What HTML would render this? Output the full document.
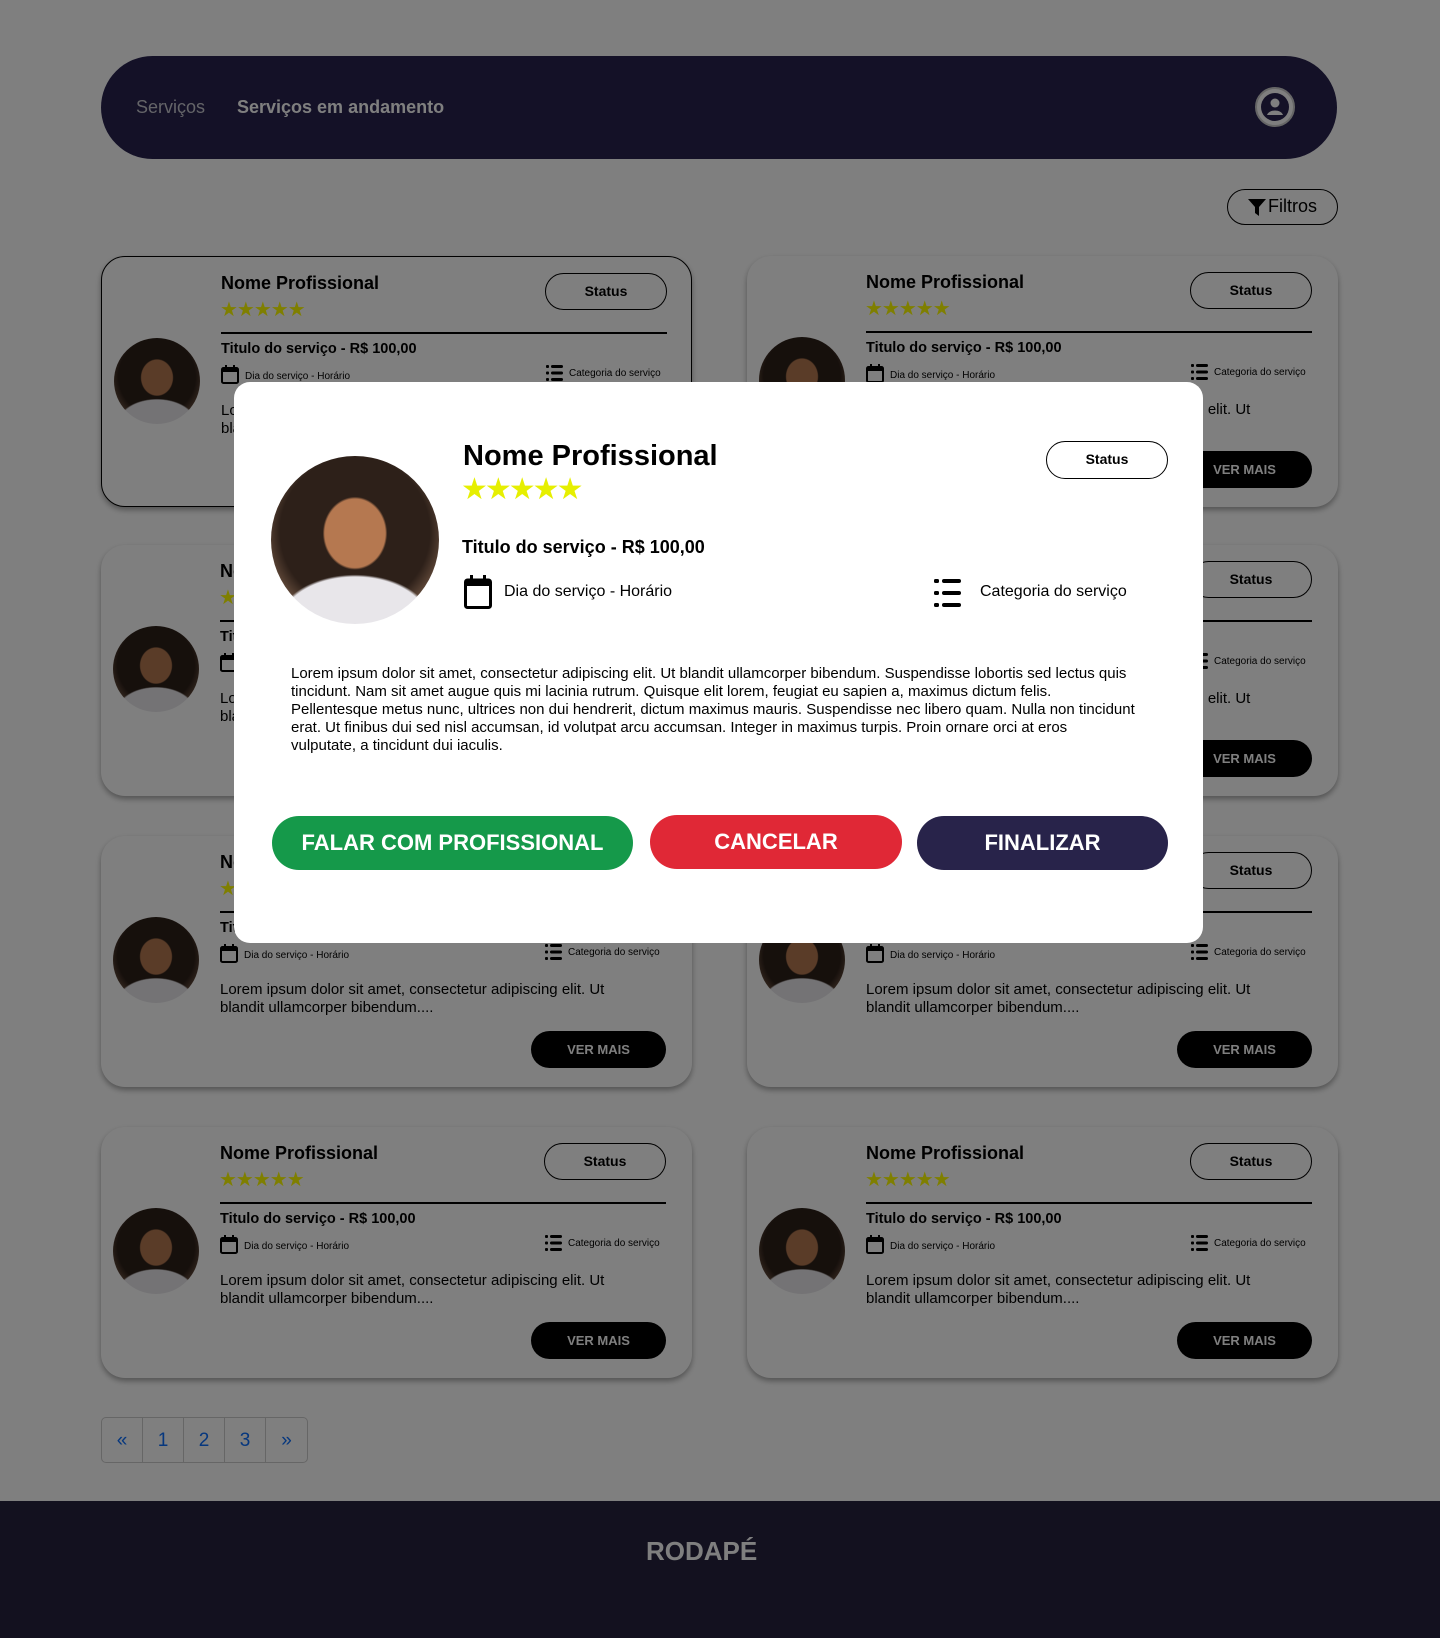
<!DOCTYPE html>
<html><head><meta charset="utf-8"><style>
*{box-sizing:border-box;margin:0;padding:0}
body{width:1440px;height:1638px;position:relative;background:#fff;font-family:"Liberation Sans",sans-serif;overflow:hidden;color:#000}
.abs{position:absolute}
.nav{left:101px;top:56px;width:1236px;height:103px;background:#28234f;border-radius:52px}
.nav .l1{left:35px;top:41px;font-size:18px;color:#c8c8d0}
.nav .l2{left:136px;top:41px;font-size:18px;font-weight:bold;color:#fff}
.user{left:1154px;top:31px;width:40px;height:40px;border-radius:50%;background:#fff;border:2px solid #ccc}
.filt{left:1227px;top:189px;width:111px;height:36px;border:1.5px solid #000;border-radius:18px;font-size:18px;line-height:33px;padding-left:40px}
.card{width:591px;height:251px;border-radius:24px;background:#fff;box-shadow:0 3px 6px rgba(0,0,0,.35)}
.card.b{border:1.5px solid #000}
.av{border-radius:50%;background:radial-gradient(ellipse 30% 34% at 50% 46%,#b57850 0 60%,transparent 64%),radial-gradient(ellipse 55% 35% at 50% 100%,#e8e6ea 0 80%,transparent 84%),radial-gradient(circle at 50% 45%,#2d2019 0 60%,#6b5140 75%,#c9a88a 100%)}
.card .av{left:12px;top:81px;width:86px;height:86px}
.nm{left:119px;top:16px;font-size:18px;font-weight:bold}
.st{left:118px;top:40px;font-size:20px;color:#ffff00;letter-spacing:-1px}
.stb{left:443px;top:16px;width:122px;height:37px;border:1.5px solid #000;border-radius:19px;font-size:14px;font-weight:bold;text-align:center;line-height:34px}
.hr{left:119px;top:75px;width:446px;height:1.5px;background:#000}
.tt{left:119px;top:84px;font-size:14.5px;font-weight:bold}
.cal{left:119px;top:108px}
.dt{left:143px;top:114px;font-size:10px}
.lst{left:444px;top:107px}
.ct{left:467px;top:111px;font-size:10px}
.ds{left:119px;top:145px;width:415px;font-size:15px;line-height:18px}
.vm{left:430px;top:195px;width:135px;height:37px;background:#000;border-radius:19px;color:#fff;font-size:13px;font-weight:bold;text-align:center;line-height:37px}
.pg{left:101px;top:1417px;height:46px;display:flex;border:1px solid #ccc;border-radius:5px;overflow:hidden}
.pg div{width:41px;border-right:1px solid #ccc;text-align:center;line-height:46px;color:#0d6efd;font-size:19px}
.pg div:last-child{border-right:none}
.foot{left:0;top:1501px;width:1440px;height:137px;background:#26223f}
.foot div{left:646px;top:35px;font-size:26px;font-weight:bold;color:#fff}
.ov{left:0;top:0;width:1440px;height:1638px;background:rgba(0,0,0,.5)}
.modal{left:234px;top:382px;width:969px;height:561px;background:#fff;border-radius:16px}
.btn{height:54px;border-radius:27px;color:#fff;font-size:22px;font-weight:bold;text-align:center;line-height:54px}
</style></head><body>
<div class="abs nav"><div class="abs l1">Serviços</div><div class="abs l2">Serviços em andamento</div>
<div class="abs user"><svg width="36" height="36" viewBox="0 0 36 36"><circle cx="18" cy="18" r="16" fill="#fff"/><circle cx="18" cy="18" r="14" fill="#28234f"/><circle cx="18" cy="14" r="4.5" fill="#fff"/><path d="M10 26c2-6 14-6 16 0z" fill="#fff"/></svg></div></div>
<div class="abs filt"><svg class="abs" style="left:20px;top:9px" width="18" height="17" viewBox="0 0 18 17"><path d="M0 0h18l-7 8v9l-4-3V8z" fill="#000"/></svg>Filtros</div>

<div id="cards"></div>
<script>
var xs=[101,747],ys=[256,545,836,1127],h='';
var cal='<svg width="18" height="19" viewBox="0 0 18 19"><rect x="1" y="3" width="16" height="15" rx="1.5" fill="none" stroke="#000" stroke-width="2"/><rect x="1" y="3" width="16" height="4" fill="#000"/><rect x="4" y="0" width="2" height="4" fill="#000"/><rect x="12" y="0" width="2" height="4" fill="#000"/></svg>';
var lst='<svg width="18" height="18" viewBox="0 0 18 18"><g fill="#000"><rect x="0" y="1" width="3" height="3" rx="1"/><rect x="5" y="1" width="12" height="3" rx="1.5"/><rect x="0" y="7.5" width="3" height="3" rx="1"/><rect x="5" y="7.5" width="12" height="3" rx="1.5"/><rect x="0" y="14" width="3" height="3" rx="1"/><rect x="5" y="14" width="12" height="3" rx="1.5"/></g></svg>';
for(var r=0;r<4;r++)for(var c=0;c<2;c++){
h+='<div class="abs card'+(r==0&&c==0?' b':'')+'" style="left:'+xs[c]+'px;top:'+ys[r]+'px"><div class="abs av"></div><div class="abs nm">Nome Profissional</div><div class="abs st">★★★★★</div><div class="abs stb">Status</div><div class="abs hr"></div><div class="abs tt">Titulo do serviço - R$ 100,00</div><div class="abs cal">'+cal+'</div><div class="abs dt">Dia do serviço - Horário</div><div class="abs lst">'+lst+'</div><div class="abs ct" style="left:467px">Categoria do serviço</div><div class="abs ds">Lorem ipsum dolor sit amet, consectetur adipiscing elit. Ut blandit ullamcorper bibendum....</div><div class="abs vm">VER MAIS</div></div>';}
document.getElementById('cards').innerHTML=h;
</script>
<div class="abs pg"><div>«</div><div>1</div><div>2</div><div>3</div><div>»</div></div>
<div class="abs foot"><div class="abs">RODAPÉ</div></div>
<div class="abs ov"></div>

<div class="abs modal">
<div class="abs av" style="left:37px;top:74px;width:168px;height:168px"></div>
<div class="abs" style="left:229px;top:58px;font-size:29px;font-weight:bold">Nome Profissional</div>
<div class="abs" style="left:227px;top:90px;font-size:30px;color:#e6ef00;letter-spacing:-3px">★★★★★</div>
<div class="abs" style="left:812px;top:59px;width:122px;height:38px;border:1.5px solid #000;border-radius:19px;font-size:14px;font-weight:bold;text-align:center;line-height:35px">Status</div>
<div class="abs" style="left:228px;top:155px;font-size:18px;font-weight:bold">Titulo do serviço - R$ 100,00</div>
<div class="abs" style="left:230px;top:193px"><svg width="28" height="34" viewBox="0 0 28 34"><rect x="1.5" y="5" width="25" height="27.5" rx="2" fill="none" stroke="#000" stroke-width="3"/><rect x="1.5" y="5" width="25" height="6" fill="#000"/><rect x="6" y="0" width="3" height="7" fill="#000"/><rect x="19" y="0" width="3" height="7" fill="#000"/></svg></div>
<div class="abs" style="left:270px;top:201px;font-size:16px">Dia do serviço - Horário</div>
<div class="abs" style="left:700px;top:196px"><svg width="28" height="30" viewBox="0 0 28 30"><g fill="#000"><rect x="0" y="1" width="5" height="4" rx="1.5"/><rect x="8" y="1" width="19" height="4" rx="2"/><rect x="0" y="13" width="5" height="4" rx="1.5"/><rect x="8" y="13" width="19" height="4" rx="2"/><rect x="0" y="25" width="5" height="4" rx="1.5"/><rect x="8" y="25" width="19" height="4" rx="2"/></g></svg></div>
<div class="abs" style="left:746px;top:201px;font-size:16px">Categoria do serviço</div>
<div class="abs" style="left:57px;top:283px;width:845px;font-size:15px;line-height:18px">Lorem ipsum dolor sit amet, consectetur adipiscing elit. Ut blandit ullamcorper bibendum. Suspendisse lobortis sed lectus quis tincidunt. Nam sit amet augue quis mi lacinia rutrum. Quisque elit lorem, feugiat eu sapien a, maximus dictum felis. Pellentesque metus nunc, ultrices non dui hendrerit, dictum maximus mauris. Suspendisse nec libero quam. Nulla non tincidunt erat. Ut finibus dui sed nisl accumsan, id volutpat arcu accumsan. Integer in maximus turpis. Proin ornare orci at eros vulputate, a tincidunt dui iaculis.</div>
<div class="abs btn" style="left:38px;top:434px;width:361px;background:#15994a">FALAR COM PROFISSIONAL</div>
<div class="abs btn" style="left:416px;top:433px;width:252px;background:#e02836">CANCELAR</div>
<div class="abs btn" style="left:683px;top:434px;width:251px;background:#28234a">FINALIZAR</div>
</div>
</body></html>
